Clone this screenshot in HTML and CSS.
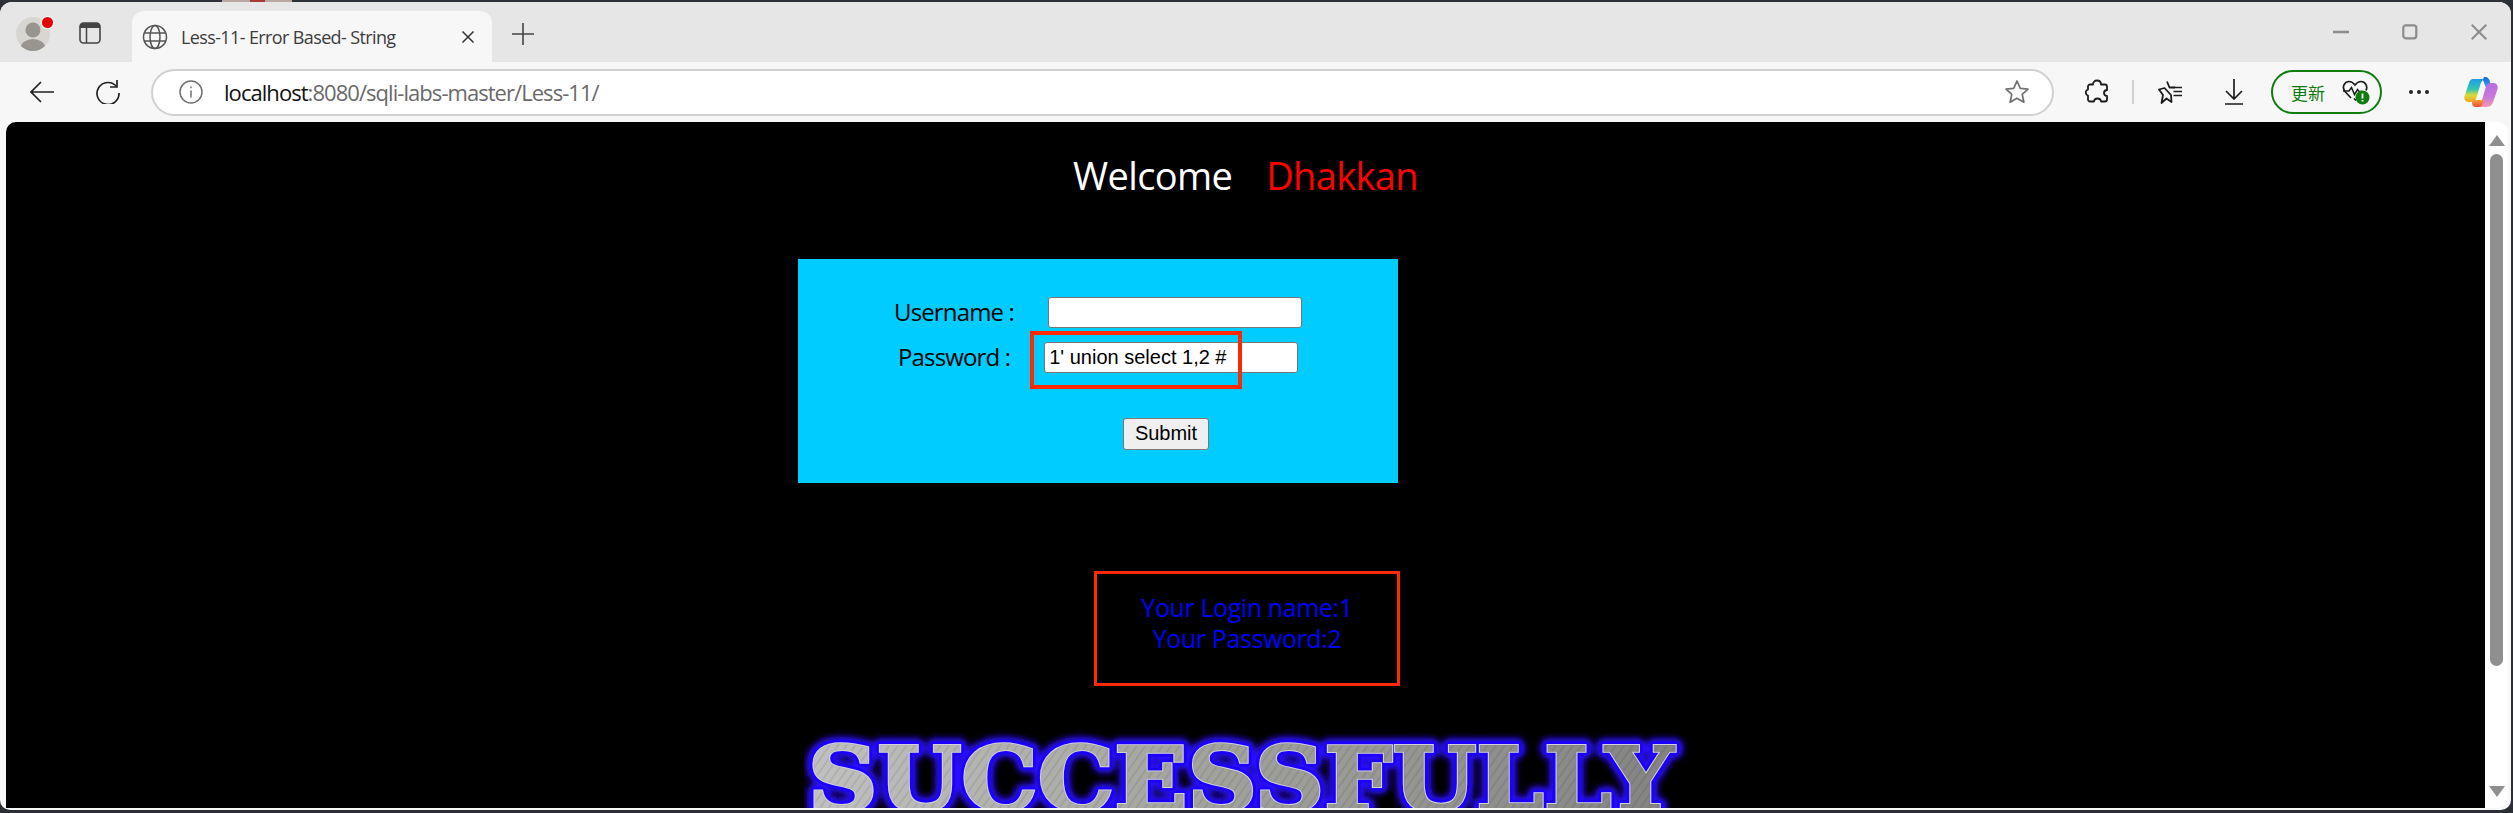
FILE: index.html
```html
<!DOCTYPE html>
<html lang="en">
<head>
<meta charset="utf-8">
<title>Less-11- Error Based- String</title>
<link rel="stylesheet" href="styles.css">
</head>
<body>
<div class="wallpaper"><span class="wp-pink"><span class="wp-red"></span></span></div>
<div class="window">
  <header class="tabstrip">
    <div class="avatar">
      <svg width="36" height="36" viewBox="0 0 36 36"><defs><clipPath id="ac"><circle cx="18" cy="18" r="17"/></clipPath></defs><circle cx="18" cy="18" r="17" fill="#d8d6d2"/><g clip-path="url(#ac)" fill="#989490"><circle cx="18" cy="14" r="7.5"/><ellipse cx="18" cy="32" rx="12.5" ry="9"/></g></svg>
      <span class="avatar-dot"></span>
    </div>
    <svg class="sidebar-icon" width="22" height="22" viewBox="0 0 22 22"><rect x="1" y="1" width="20" height="20" rx="3.5" fill="none" stroke="#444" stroke-width="1.6"/><path d="M1 6V4.5A3.5 3.5 0 0 1 4.500 1h13A3.500 3.500 0 0 1 21 4.500V6z" fill="#444"/><path d="M7.500 6v15" stroke="#444" stroke-width="1.500"/></svg>
    <div class="tab">
      <svg width="26" height="26" viewBox="0 0 26 26" fill="none" stroke="#555" stroke-width="1.500"><circle cx="13" cy="13" r="11.500"/><ellipse cx="13" cy="13" rx="5" ry="11.500"/><path d="M2.500 9h21M2.500 17h21"/></svg>
      <span class="tab-title">Less-11- Error Based- String</span>
      <svg class="tab-close" width="14" height="14" viewBox="0 0 14 14" stroke="#333" stroke-width="1.500"><path d="M1.500 1.500l11 11M12.500 1.500l-11 11"/></svg>
    </div>
    <svg class="newtab" width="22" height="22" viewBox="0 0 22 22" stroke="#444" stroke-width="1.600"><path d="M11 0v22M0 11h22"/></svg>
    <div class="winctl">
      <svg class="wc-min" width="16" height="4" viewBox="0 0 16 4"><path d="M0 2h16" stroke="#8c8c8c" stroke-width="2.400"/></svg>
      <svg class="wc-max" width="16" height="16" viewBox="0 0 16 16"><rect x="1.300" y="1.300" width="13" height="13" rx="2.500" fill="none" stroke="#8c8c8c" stroke-width="2.200"/></svg>
      <svg class="wc-close" width="16" height="16" viewBox="0 0 16 16" stroke="#8c8c8c" stroke-width="2"><path d="M.7.7l14.600 14.600M15.300.7L.7 15.300"/></svg>
    </div>
  </header>
  <nav class="toolbar">
    <svg class="tb-back" width="24" height="22" viewBox="0 0 24 22" fill="none" stroke="#222" stroke-width="1.700"><path d="M24 11H1.500M11 1L1 11l10 10"/></svg>
    <svg class="tb-reload" width="24" height="24" viewBox="0 0 24 24" fill="none" stroke="#222" stroke-width="1.700"><path d="M20.500 6.500A11 11 0 1 0 23 13"/><path d="M21 0v7h-7"/></svg>
    <div class="address">
      <svg width="24" height="24" viewBox="0 0 24 24" fill="none" stroke="#707070" stroke-width="1.500"><circle cx="12" cy="12" r="11"/><path d="M12 10.500v7M12 6.500v1.800"/></svg>
      <span class="url"><span class="url-host">localhost</span>:8080/sqli-labs-master/Less-11/</span>
      <svg class="star" width="26" height="26" viewBox="0 0 26 26" fill="none" stroke="#707070" stroke-width="1.700" stroke-linejoin="round"><path d="M13 2l3.300 7.300 7.700.8-5.800 5.200 1.700 7.900L13 19.200l-6.900 4 1.700-7.900L2 10.100l7.700-.8z"/></svg>
    </div>
    <svg class="tb-puzzle" width="24" height="26" viewBox="0 0 24 26" fill="none" stroke="#1c1c1c" stroke-width="1.800" stroke-linejoin="round"><path d="M8 5.500C8 3 9.800 1.500 12 1.500S16 3 16 5.500h4a2 2 0 0 1 2 2v3.500c-2.200.2-3 1.500-3 3s.8 2.800 3 3v3.500a2 2 0 0 1-2 2h-4c-.2-2.200-1.700-3-3.500-3s-3.300.8-3.500 3H5a2 2 0 0 1-2-2v-4c-1.500-.4-2.200-1.600-2.200-3s.7-2.600 2.200-3V7.500a2 2 0 0 1 2-2z"/></svg>
    <span class="tb-divider"></span>
    <svg class="tb-fav" width="25" height="24" viewBox="0 0 25 24" fill="none" stroke="#1c1c1c" stroke-width="1.800" stroke-linejoin="round"><path d="M9 1.500l2.500 6H17M13 15l.5 7-5-3.500L3.500 23 5 15 1 9.500 6.500 8z"/><path d="M15.500 7.500H24M15.500 11.500H24M15.500 15.500H24" stroke-width="1.500"/></svg>
    <svg class="tb-down" width="20" height="26" viewBox="0 0 20 26" fill="none" stroke="#1c1c1c" stroke-width="1.700"><path d="M10 0v20M2 12l8 8 8-8M1 25h18"/></svg>
    <div class="update">
      <span class="update-text">更新</span>
      <svg width="28" height="25" viewBox="0 0 28 25" fill="none"><path d="M9 18L3 11.500C-.5 7 2.500 1.500 7 1.500c2.500 0 4.500 1.500 6 3.500 1.500-2 3.500-3.500 6-3.500 4.500 0 7 5 5 9M14 20.500l-2-2" stroke="#1c1c1c" stroke-width="1.700"/><path d="M1 11h6l2.500-3.500 3 7 3-5 1.500 2h3" stroke="#1c1c1c" stroke-width="1.500"/><circle cx="20.500" cy="17.500" r="7" fill="#107c10"/><path d="M20.500 13.500v5M20.500 20v1.500" stroke="#fff" stroke-width="1.800"/></svg>
    </div>
    <div class="tb-more"><span></span><span></span><span></span></div>
    <svg class="tb-copilot" width="34" height="32" viewBox="0 0 34 32"><defs><linearGradient id="cp1" x1="0" y1="0" x2="0" y2="1"><stop offset="0" stop-color="#1f9be6"/><stop offset=".45" stop-color="#35c6b0"/><stop offset=".7" stop-color="#d7d93a"/><stop offset="1" stop-color="#f6a51e"/></linearGradient><linearGradient id="cp2" x1="0" y1="0" x2="0" y2="1"><stop offset="0" stop-color="#b66fe0"/><stop offset=".6" stop-color="#c878d8"/><stop offset="1" stop-color="#f59ab0"/></linearGradient><linearGradient id="cp3" x1="0" y1="0" x2="0" y2="1"><stop offset="0" stop-color="#1668d8"/><stop offset="1" stop-color="#3ea8ea"/></linearGradient><linearGradient id="cp4" x1="0" y1="0" x2="0" y2="1"><stop offset="0" stop-color="#f7a03a"/><stop offset="1" stop-color="#ee4a3a"/></linearGradient></defs><path d="M9 3h13c-4 1-5 3-6 7l-4 13c-.5 2-2 3-4 3H4c-3 0-4.500-3-3.500-6L5 7c.7-2.500 2-4 4-4z" fill="url(#cp1)"/><path d="M20 1h1c3 0 4.500 2 5 5l1.500 6H22l-3-8z" fill="url(#cp3)"/><path d="M26 7h3.500c3 0 5 3 4 6l-4 12c-1 3-3 6-7 6H11c4-1 6-3 7-7l3-10c.7-2.500 2.500-7 5-7z" fill="url(#cp2)"/><path d="M9 24h11l-1 3c-.8 2.500-2 4-5 4h-2c-3 0-4-2-4-4z" fill="url(#cp4)"/></svg>
  </nav>
  <div class="viewport">
    <main class="page">
      <h1 class="welcome"><span>Welcome</span><span class="dhakkan">Dhakkan</span></h1>
      <form class="login">
        <div class="row row-user"><label>Username :</label><input class="field" type="text"></div>
        <div class="row row-pass"><label>Password :</label><input class="field" type="text" value="1' union select 1,2 #"></div>
        <div class="row row-submit"><button class="submit" type="button">Submit</button></div>
        <span class="mark mark-pass"></span>
      </form>
      <div class="result">Your Login name:1<br>Your Password:2</div>
      <svg class="success" width="900" height="90" viewBox="0 0 900 90">
        <defs>
          <linearGradient id="metal" gradientUnits="userSpaceOnUse" x1="0" y1="0" x2="880" y2="0"><stop offset="0" stop-color="#bcbcbc"/><stop offset=".45" stop-color="#9c9c96"/><stop offset="1" stop-color="#797979"/></linearGradient>
          <pattern id="brush" width="7" height="7" patternUnits="userSpaceOnUse" patternTransform="rotate(35)"><rect width="7" height="7" fill="#fff" opacity=".07"/><rect x="3.500" width="1.200" height="7" fill="#000" opacity=".12"/></pattern>
          <filter id="glow" x="-5%" y="-30%" width="110%" height="160%"><feGaussianBlur stdDeviation="3"/></filter>
        </defs>
        <text class="success-text" x="4" y="84" textLength="866" lengthAdjust="spacingAndGlyphs" fill="none" stroke="#2a10ff" stroke-width="15" filter="url(#glow)" stroke-linejoin="round">SUCCESSFULLY</text>
        <text class="success-text" x="4" y="84" textLength="866" lengthAdjust="spacingAndGlyphs" fill="none" stroke="#1c00ff" stroke-width="9" stroke-linejoin="round">SUCCESSFULLY</text>
        <text class="success-text" x="4" y="84" textLength="866" lengthAdjust="spacingAndGlyphs" fill="url(#metal)" stroke="#d2d2dc" stroke-width="3.500">SUCCESSFULLY</text>
        <text class="success-text" x="4" y="84" textLength="866" lengthAdjust="spacingAndGlyphs" fill="url(#metal)" stroke="url(#metal)" stroke-width="1.500">SUCCESSFULLY</text>
        <text class="success-text" x="4" y="84" textLength="866" lengthAdjust="spacingAndGlyphs" fill="url(#brush)">SUCCESSFULLY</text>
      </svg>
    </main>
    <aside class="scrollbar">
      <span class="arrow arrow-up"></span>
      <span class="thumb"></span>
      <span class="arrow arrow-down"></span>
    </aside>
  </div>
</div>
</body>
</html>
```
FILE: styles.css
```css
* { box-sizing: border-box; }
html, body { margin: 0; height: 813px; overflow: hidden; }
body { background: #2b2e35; font-family: "Open Sans", "Noto Sans", sans-serif; position: relative; }

.wallpaper { position: absolute; top: 0; left: 0; width: 100%; height: 3px; background: #2e3138; }
.wp-pink { position: absolute; left: 222px; width: 70px; height: 3px; background: #b9a8a2; }
.wp-red { position: absolute; left: 28px; width: 15px; height: 3px; background: #a83a3a; }

.window { position: relative; width: 2511px; height: 808px; margin-top: 2px; background: #f7f7f7; border-radius: 12px 12px 10px 10px; overflow: hidden; display: flex; flex-direction: column; }

.tabstrip { height: 60px; flex: none; background: #e6e6e6; display: flex; align-items: center; }
.avatar { position: relative; width: 36px; height: 36px; margin: 0 0 -4px 15px; }
.avatar svg { display: block; }
.avatar-dot { position: absolute; top: 1px; left: 27px; width: 11px; height: 11px; border-radius: 50%; background: #e60000; box-shadow: 0 0 0 1.500px #f2f2f2; }
.sidebar-icon { margin: 0 0 -2px 28px; flex: none; }
.tab { align-self: flex-end; width: 360px; height: 51px; margin-left: 31px; padding: 0 17px 0 10px; background: #f7f7f7; border-radius: 12px 12px 0 0; display: flex; align-items: center; position: relative; }
.tab-title { margin-left: 13px; font-size: 18px; letter-spacing: -.62px; color: #3c3c3c; white-space: nowrap; flex: 1; }
.tab-close { flex: none; margin-right: 0; }
.newtab { margin: 0 0 -4px 20px; flex: none; }
.winctl { margin-left: auto; display: flex; align-items: center; margin-right: 24px; }
.wc-min { margin-top: 0; }
.wc-max { margin-left: 53px; }
.wc-close { margin-left: 53px; }

.toolbar { height: 60px; flex: none; background: #f7f7f7; display: flex; align-items: center; }
.tb-back { margin-left: 30px; flex: none; }
.tb-reload { margin-left: 42px; flex: none; }
.address { width: 1903px; height: 47px; margin-left: 31px; padding: 0 22px 0 26px; flex: none; background: #fff; border: 2px solid #d0d0d0; border-radius: 24px; display: flex; align-items: center; }
.url { margin-left: 21px; font-size: 22px; letter-spacing: -.95px; color: #6a6a6a; white-space: nowrap; flex: 1; }
.url-host { color: #111; }
.tb-puzzle { margin-left: 31px; flex: none; }
.tb-divider { width: 2px; height: 24px; margin-left: 23px; background: #d0d0d0; flex: none; }
.tb-fav { margin-left: 24px; flex: none; }
.tb-down { margin-left: 41px; flex: none; }
.update { width: 111px; height: 44px; margin-left: 27px; padding-left: 18px; border: 2px solid #107c10; border-radius: 22px; display: flex; align-items: center; flex: none; }
.update-text { font-family: "Noto Sans CJK SC", sans-serif; font-size: 17px; color: #107c10; width: 51px; flex: none; }
.tb-more { margin-left: 27px; width: 20px; display: flex; justify-content: space-between; flex: none; }
.tb-more span { width: 4px; height: 4px; border-radius: 50%; background: #222; }
.tb-copilot { margin-left: 35px; flex: none; }

.viewport { height: 686px; flex: none; margin-left: 6px; width: 2502px; display: flex; }
.page { width: 2479px; flex: none; background: #000; border-radius: 10px 0 0 0; overflow: hidden; position: relative; }
.welcome { margin: 23px 0 0; height: 61px; font-size: 38px; line-height: 60px; font-weight: 400; text-align: center; color: #fff; letter-spacing: -.65px; }
.dhakkan { margin-left: 34px; color: #f00; }

.login { position: relative; width: 600px; height: 224px; margin: 53px 0 0 792px; padding-top: 37px; background: #0cf; font-size: 24px; color: #000; letter-spacing: -.85px; }
.row { display: flex; align-items: center; height: 33px; }
.row label { white-space: nowrap; margin-bottom: 3px; }
.row-user { padding-left: 96px; }
.row-pass { padding-left: 100px; margin-top: 12px; }
.row-user .field { margin-left: 34px; }
.row-pass .field { margin-left: 34px; }
.field { width: 254px; height: 31px; padding: 0 4px; background: #fff; border: 1px solid #767676; border-radius: 3px; font-family: "Liberation Sans", Arial, sans-serif; font-size: 20px; letter-spacing: 0; color: #000; }
.row-submit { padding-left: 325px; margin-top: 43px; }
.submit { width: 86px; height: 32px; padding: 0; background: #efefef; border: 1px solid #767676; border-radius: 3px; font-family: "Liberation Sans", Arial, sans-serif; font-size: 20px; letter-spacing: 0; color: #000; }
.mark { position: absolute; border: 4px solid #ff2a00; }
.mark-pass { left: 232px; top: 72px; width: 212px; height: 58px; }

.result { width: 306px; height: 115px; margin: 88px 0 0 1088px; padding-top: 18px; border: 3px solid #ff2a00; text-align: center; font-size: 25px; line-height: 31px; letter-spacing: -.4px; color: #00f; }

.success { display: block; margin: 40px 0 0 798px; }
.success-text { font-family: "DejaVu Serif", serif; font-weight: 700; font-size: 88px; }

.scrollbar { width: 23px; flex: none; background: #fff; border-radius: 0 10px 10px 0; display: flex; flex-direction: column; align-items: center; position: relative; }
.thumb { width: 13px; height: 512px; margin-top: 8px; background: #8f8f8f; border-radius: 7px; }
.arrow { width: 0; height: 0; border-left: 8px solid transparent; border-right: 8px solid transparent; }
.arrow-up { margin-top: 13px; border-bottom: 11px solid #8f8f8f; }
.arrow-down { margin-top: auto; margin-bottom: 11px; border-top: 11px solid #8f8f8f; }
```
